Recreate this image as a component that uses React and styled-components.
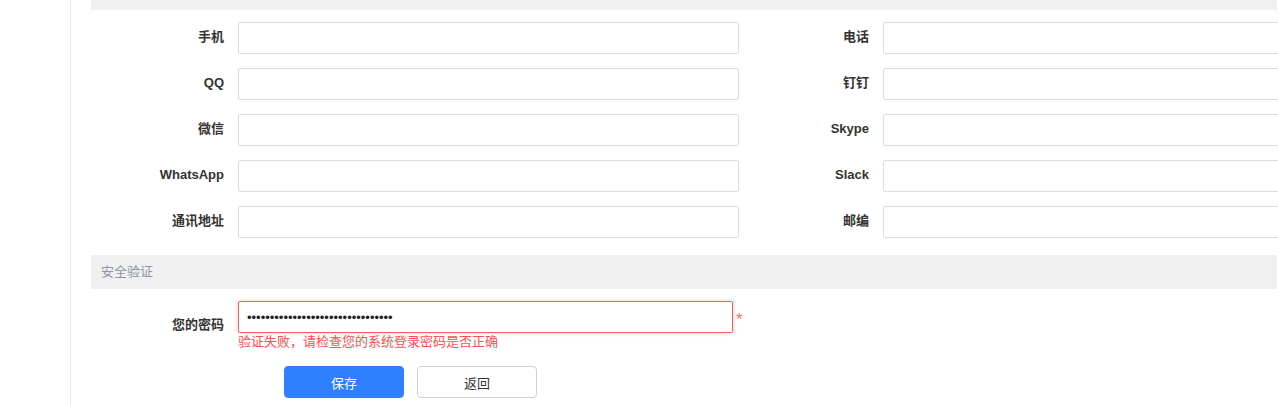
import React from 'react';
import styled, { createGlobalStyle } from 'styled-components';

const GlobalStyle = createGlobalStyle`
  html, body {
    margin: 0;
    padding: 0;
    background: #fff;
    overflow: hidden;
    font-family: "Liberation Sans", Arial, "Noto Sans CJK SC", sans-serif;
  }
`;

const Page = styled.div`
  display: flex;
  width: 1278px;
  height: 405px;
  overflow: hidden;
`;

const Sidebar = styled.div`
  width: 70px;
  flex-shrink: 0;
  border-right: 1px solid #e8e8e8;
`;

const Main = styled.div`
  flex: 1;
  min-width: 0;
  padding: 0 1px 0 20px;
  overflow: hidden;
`;

const BarEnd = styled.div`
  height: 10px;
  background: #f0f0f0;
`;

const FormGrid = styled.div`
  display: grid;
  grid-template-columns: 133px 501px 116px 420px;
  column-gap: 14px;
  row-gap: 14px;
  margin-top: 12px;
`;

const Label = styled.label`
  text-align: right;
  font-size: 13px;
  font-weight: bold;
  line-height: 30px;
  padding-bottom: 2px;
  color: #333;
  white-space: nowrap;
`;

const Input = styled.input`
  box-sizing: border-box;
  height: 32px;
  width: ${(props) => props.width || '100%'};
  margin: 0;
  padding: 0 8px;
  border: 1px solid ${(props) => (props.invalid ? '#ff5a5a' : '#dcdcdc')};
  border-radius: 2px;
  box-shadow: ${(props) => (props.invalid ? '0 0 4px rgba(255, 80, 80, 0.35)' : 'none')};
  font-family: "Liberation Sans", Arial, sans-serif;
  font-size: 13px;
  color: #222;
  outline: none;
  background: #fff;
`;

const SectionHeader = styled.div`
  margin-top: 17px;
  height: 34px;
  line-height: 34px;
  padding-left: 10px;
  background: #f0f0f0;
  color: #8f96a3;
  font-size: 13px;
`;

const PasswordRow = styled.div`
  display: grid;
  grid-template-columns: 133px auto;
  column-gap: 14px;
  align-items: center;
  margin-top: 12px;
`;

const Field = styled.div`
  display: flex;
  flex-direction: column;
`;

const InputWrap = styled.div`
  display: flex;
  align-items: center;
`;

const Required = styled.span`
  margin-left: 3px;
  padding-top: 4px;
  color: #ff6a6a;
  font-size: 17px;
  line-height: 17px;
`;

const ErrorText = styled.div`
  font-size: 13px;
  line-height: 18px;
  color: #ff4d4f;
`;

const ButtonRow = styled.div`
  display: flex;
  gap: 13px;
  margin-top: 15px;
  padding-left: 193px;
`;

const Button = styled.button`
  box-sizing: border-box;
  width: 120px;
  height: 32px;
  border-radius: 4px;
  font-family: "Liberation Sans", Arial, "Noto Sans CJK SC", sans-serif;
  font-size: 13px;
  cursor: pointer;
  background: ${(props) => (props.primary ? '#2e80ff' : '#fff')};
  color: ${(props) => (props.primary ? '#fff' : '#333')};
  border: 1px solid ${(props) => (props.primary ? '#2e80ff' : '#d0d0d0')};
`;

const fields = [
  ['手机', '电话'],
  ['QQ', '钉钉'],
  ['微信', 'Skype'],
  ['WhatsApp', 'Slack'],
  ['通讯地址', '邮编'],
];

export default function App() {
  return (
    <>
      <GlobalStyle />
      <Page>
        <Sidebar />
        <Main>
          <BarEnd />
          <FormGrid>
            {fields.map(([left, right]) => (
              <React.Fragment key={left}>
                <Label>{left}</Label>
                <Input type="text" />
                <Label>{right}</Label>
                <Input type="text" />
              </React.Fragment>
            ))}
          </FormGrid>
          <SectionHeader>安全验证</SectionHeader>
          <PasswordRow>
            <Label>您的密码</Label>
            <Field>
              <InputWrap>
                <Input
                  type="password"
                  invalid
                  width="495px"
                  defaultValue="abcdefghijklmnopqrstuvwxyz123456"
                />
                <Required>*</Required>
              </InputWrap>
              <ErrorText>验证失败，请检查您的系统登录密码是否正确</ErrorText>
            </Field>
          </PasswordRow>
          <ButtonRow>
            <Button primary>保存</Button>
            <Button>返回</Button>
          </ButtonRow>
        </Main>
      </Page>
    </>
  );
}
